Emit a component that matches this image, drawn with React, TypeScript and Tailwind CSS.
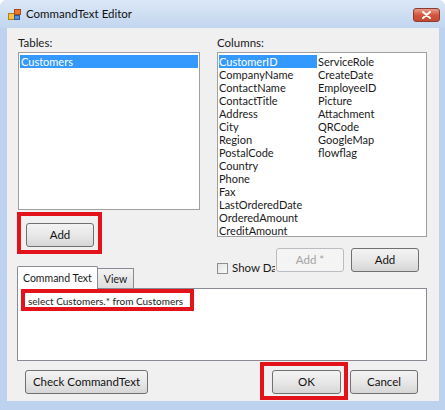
import React from 'react';

const font = "font-['Lato','Noto_Sans',sans-serif]";

const columnsLeft = [
  'CustomerID',
  'CompanyName',
  'ContactName',
  'ContactTitle',
  'Address',
  'City',
  'Region',
  'PostalCode',
  'Country',
  'Phone',
  'Fax',
  'LastOrderedDate',
  'OrderedAmount',
  'CreditAmount',
];

const columnsRight = [
  'ServiceRole',
  'CreateDate',
  'EmployeeID',
  'Picture',
  'Attachment',
  'QRCode',
  'GoogleMap',
  'flowflag',
];

function WinButton({ label, width, disabled = false }: { label: string; width: string; disabled?: boolean }) {
  return (
    <div
      className={`${width} h-[24px] flex items-center justify-center rounded-[3px] border text-[11.5px] ${
        disabled
          ? 'border-[#b9bcc0] bg-[#f4f4f4] text-[#a3a3a3]'
          : 'border-[#707070] bg-gradient-to-b from-[#f3f3f3] via-[#e8e8e8] to-[#d6d6d6] text-[#111]'
      }`}
    >
      {label}
    </div>
  );
}

function RedBox({ className }: { className: string }) {
  return <div className={`absolute border-[4px] border-[#e3121b] pointer-events-none ${className}`} />;
}

function AppIcon() {
  return (
    <svg width="13" height="13" viewBox="0 0 13 13">
      <rect x="0.5" y="5.5" width="6" height="6" fill="#f3c34a" stroke="#b57d16" />
      <rect x="6.5" y="1.5" width="6" height="5" fill="#e8792b" stroke="#a8491a" />
      <rect x="6.5" y="7.5" width="5" height="4" fill="#5b8fd6" stroke="#2d5c9e" />
    </svg>
  );
}

export default function App() {
  return (
    <div className={`${font} w-[445px] h-[410px] bg-[#bcd2ee] rounded-t-[7px] flex flex-col text-[#1a1a1a]`}>
      {/* Title bar */}
      <div className="h-[28px] flex items-center pl-[8px] pr-[5px] bg-gradient-to-b from-[#dbe7f6] to-[#c2d6ef] rounded-t-[7px]">
        <AppIcon />
        <span className="ml-[5px] text-[11.5px] text-[#111]">CommandText Editor</span>
        <div className="ml-auto mt-[2px] w-[27px] h-[14px] rounded-[3px] border border-[#8d3b30] bg-gradient-to-b from-[#e99a8a] via-[#d2553e] to-[#c24a33] flex items-center justify-center">
          <svg width="9" height="8" viewBox="0 0 9 8">
            <path d="M1 1 L8 7 M8 1 L1 7" stroke="#fff" strokeWidth="2" strokeLinecap="round" />
          </svg>
        </div>
      </div>

      {/* Client area */}
      <div className="ml-[7px] mr-[6px] mb-[9px] flex-1 bg-[#f0f0f0] flex flex-col">
        {/* Lists */}
        <div className="flex h-[219px]">
          <div className="ml-[11px] w-[182px] flex flex-col">
            <div className="h-[24px] pt-[6px] text-[11.5px]">Tables:</div>
            <div className="h-[158px] bg-white border border-[#a0a0a0] pt-[2px] px-[1px] text-[11px] leading-[13px]">
              <div className="bg-[#3399ff] text-white pl-[1px]">Customers</div>
            </div>
            <div className="relative ml-[8px] mt-[13px] w-[68px]">
              <WinButton label="Add" width="w-[68px]" />
              <RedBox className="-left-[9px] -right-[8px] -top-[11px] -bottom-[7px]" />
            </div>
          </div>
          <div className="ml-[17px] w-[210px] flex flex-col">
            <div className="h-[24px] pt-[6px] text-[11.5px]">Columns:</div>
            <div className="h-[185px] bg-white border border-[#a0a0a0] pt-[2px] px-[1px] text-[11px] leading-[13px] flex">
              <div className="w-[98px] flex flex-col">
                {columnsLeft.map((c, i) => (
                  <div key={c} className={i === 0 ? 'bg-[#3399ff] text-white' : ''}>
                    {c}
                  </div>
                ))}
              </div>
              <div className="pl-[1px] flex flex-col">
                {columnsRight.map((c) => (
                  <div key={c}>{c}</div>
                ))}
              </div>
            </div>
          </div>
        </div>

        {/* Tabs + column buttons */}
        <div className="flex h-[40px] mt-[1px]">
          <div className="ml-[10px] self-end flex items-end text-[10.5px]">
            <div className="h-[23px] px-[5px] pt-[4px] bg-white border border-b-0 border-[#898c95] rounded-t-[2px] relative z-10 -mb-px">
              Command Text
            </div>
            <div className="h-[20px] px-[6px] pt-[3px] border border-b-0 border-l-0 border-[#898c95] bg-gradient-to-b from-[#f3f3f3] to-[#dedede]">
              View
            </div>
          </div>
          <div className="ml-auto mr-[20px] flex">
            <div className="flex items-center mt-[14px] h-[12px] self-start text-[11.5px]">
              <div className="w-[11px] h-[11px] border border-[#8e8f8f] bg-gradient-to-br from-[#e4e4e4] to-[#fafafa]" />
              <span className="ml-[4px] w-[43px] overflow-hidden whitespace-nowrap">Show Data</span>
            </div>
            <div className="ml-[1px]">
              <WinButton label="Add *" width="w-[68px]" disabled />
            </div>
            <div className="ml-[7px]">
              <WinButton label="Add" width="w-[68px]" />
            </div>
          </div>
        </div>

        {/* Tab panel */}
        <div className="ml-[10px] w-[410px] h-[73px] border border-[#898c95] bg-white p-[1px]">
          <div className="relative h-full bg-white text-[10px] pl-[9px] pt-[4px]">
            select Customers.* from Customers
            <RedBox className="left-[2px] top-[-1px] w-[173px] h-[22px]" />
          </div>
        </div>

        {/* Bottom buttons */}
        <div className="flex mt-[9px]">
          <div className="ml-[18px]">
            <WinButton label="Check CommandText" width="w-[123px]" />
          </div>
          <div className="relative ml-[124px]">
            <WinButton label="OK" width="w-[69px]" />
            <RedBox className="-left-[12px] -right-[7px] -top-[8px] -bottom-[6px]" />
          </div>
          <div className="ml-[9px]">
            <WinButton label="Cancel" width="w-[68px]" />
          </div>
        </div>
      </div>
    </div>
  );
}
